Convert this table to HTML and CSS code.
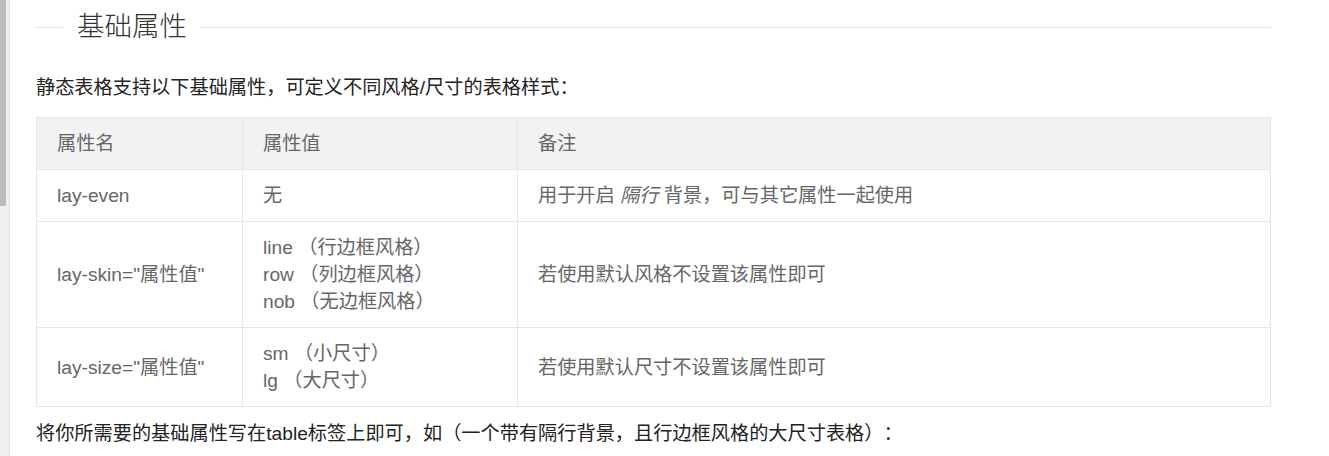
FILE: index.html
```html
<!DOCTYPE html>
<html lang="zh-CN">
<head>
<meta charset="utf-8">
<title>基础属性</title>
<link rel="stylesheet" href="styles.css">
</head>
<body>
<div class="page">
  <div class="sidebar"><div class="thumb"></div></div>
  <main class="main">
    <div class="title-row">
      <span class="rule rule-short"></span>
      <h2 class="title">基础属性</h2>
      <span class="rule rule-long"></span>
    </div>
    <p class="text text-first">静态表格支持以下基础属性，可定义不同风格/尺寸的表格样式：</p>
    <table class="attr-table">
      <colgroup>
        <col class="col-name">
        <col class="col-value">
        <col>
      </colgroup>
      <thead>
        <tr><th>属性名</th><th>属性值</th><th>备注</th></tr>
      </thead>
      <tbody>
        <tr>
          <td>lay-even</td>
          <td>无</td>
          <td>用于开启 <em>隔行</em> 背景，可与其它属性一起使用</td>
        </tr>
        <tr>
          <td>lay-skin="属性值"</td>
          <td>line （行边框风格）<br>row （列边框风格）<br>nob （无边框风格）</td>
          <td>若使用默认风格不设置该属性即可</td>
        </tr>
        <tr>
          <td>lay-size="属性值"</td>
          <td>sm （小尺寸）<br>lg （大尺寸）</td>
          <td>若使用默认尺寸不设置该属性即可</td>
        </tr>
      </tbody>
    </table>
    <p class="text text-last">将你所需要的基础属性写在table标签上即可，如（一个带有隔行背景，且行边框风格的大尺寸表格）：</p>
  </main>
</div>
</body>
</html>
```

FILE: styles.css
```css
html, body {
  margin: 0;
  padding: 0;
  background: #fff;
}

body {
  font-family: "Liberation Sans", "Noto Sans CJK SC", sans-serif;
  color: #222;
  height: 456px;
  overflow: hidden;
  text-spacing-trim: space-all;
  font-kerning: none;
}

.page {
  display: flex;
  height: 456px;
}

.sidebar {
  width: 9px;
  flex: none;
  background: #f0f0f0;
  border-right: 1px solid #e4e4e4;
}

.thumb {
  width: 6px;
  height: 206px;
  background: #bdbdbd;
}

.main {
  flex: 1;
  padding: 0 58px 0 26px;
  min-width: 0;
}

.title-row {
  display: flex;
  align-items: center;
  height: 54px;
}

.rule {
  height: 1px;
  background: #e2e2e2;
}

.rule-short {
  width: 27px;
  flex: none;
}

.rule-long {
  flex: 1;
}

.title {
  margin: 0 13px 0 14px;
  font-size: 27.5px;
  font-weight: 300;
  line-height: 34px;
  color: #333;
}

.text {
  margin: 0;
  font-size: 19.2px;
  line-height: 28px;
  color: #222;
}

.text-first {
  margin-top: 20px;
}

.text-last {
  margin-top: 13px;
}

.attr-table {
  width: 100%;
  margin-top: 15px;
  border-collapse: collapse;
  table-layout: fixed;
  font-size: 19.2px;
  color: #666;
}

.col-name {
  width: 206px;
}

.col-value {
  width: 275px;
}

.attr-table th,
.attr-table td {
  border: 1px solid #e6e6e6;
  padding: 12px 20px;
  line-height: 27px;
  text-align: left;
  font-weight: normal;
}

.attr-table th {
  background: #f2f2f2;
}

.attr-table em {
  font-style: italic;
}
```
